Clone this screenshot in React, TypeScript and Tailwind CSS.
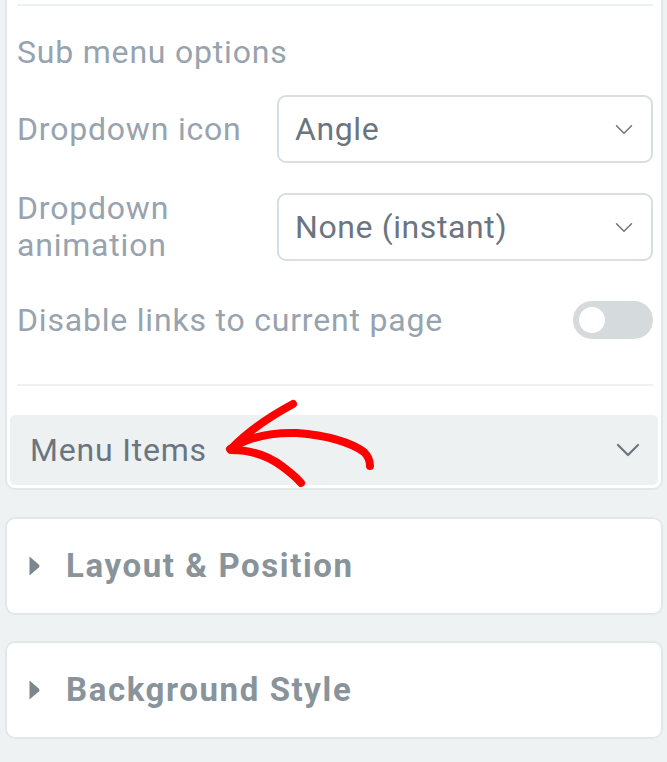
import React from "react";

const Chevron = ({ className }: { className?: string }) => (
  <svg viewBox="0 0 24 14" className={className} fill="none" stroke="currentColor" strokeLinecap="round" strokeLinejoin="round">
    <path d="M2 2l10 10 10-10" />
  </svg>
);

const Caret = () => (
  <svg viewBox="0 0 11 20" className="w-[11px] h-[20px] text-[#7b868d]" fill="currentColor">
    <path d="M0.5 0.5 L10 8.8 Q11 10 10 11.2 L0.5 19.5 Z" />
  </svg>
);

const SelectBox = ({ value }: { value: string }) => (
  <div className="flex-1 h-[68px] border-2 border-[#d8dee1] rounded-[9px] flex items-center justify-between pl-[16px] pr-[18px]">
    <span className="text-[32px] tracking-[0.6px] text-[#6b7580]">{value}</span>
    <Chevron className="w-[18px] h-[11px] text-[#6b7580] [stroke-width:2]" />
  </div>
);

const Section = ({ title }: { title: string }) => (
  <div className="h-[98px] bg-white border-2 border-[#e1e8ea] rounded-[10px] flex items-center pl-[22px]">
    <Caret />
    <span className="ml-[26px] text-[33px] font-bold tracking-[1.6px] text-[#89939a]">{title}</span>
  </div>
);

export default function App() {
  return (
    <div
      className="min-h-[762px] bg-[#eef2f3] overflow-hidden pl-[5px] pr-[4px]"
      style={{ fontFamily: "Roboto, 'Liberation Sans', sans-serif" }}
    >
      {/* open panel, top scrolled out of view */}
      <div className="relative -mt-[10px] bg-white border-2 border-[#e1e8ea] rounded-b-[10px] pt-[12px] pb-[3px]">
        <div className="pl-[10px] pr-[8px] text-[32px] tracking-[0.8px] text-[#97a3ae]">
          <div className="h-[2px] bg-[#eef1f2]" />
          <div className="mt-[26px] h-[40px] leading-[40px]">Sub menu options</div>

          <div className="mt-[23px] flex items-center">
            <div className="w-[260px] leading-[40px]">Dropdown icon</div>
            <SelectBox value="Angle" />
          </div>

          <div className="mt-[27px] flex items-center">
            <div className="w-[260px] leading-[37px]">
              Dropdown
              <br />
              animation
            </div>
            <SelectBox value="None (instant)" />
          </div>

          <div className="mt-[37px] h-[38px] flex items-center justify-between">
            <span className="leading-[38px]">Disable links to current page</span>
            <div className="w-[80px] h-[38px] rounded-full bg-[#d5dadd] flex items-center pl-[6px]">
              <div className="w-[26px] h-[26px] rounded-full bg-white" />
            </div>
          </div>

          <div className="mt-[45px] h-[2px] bg-[#eef1f2]" />
        </div>

        <div className="mt-[29px] mx-[3px] h-[70px] rounded-[5px] bg-[#eef1f2] flex items-center justify-between pl-[20px] pr-[18px]">
          <span className="text-[32px] tracking-[0.8px] text-[#6b7580]">Menu Items</span>
          <Chevron className="w-[24px] h-[14px] text-[#6b7580] [stroke-width:2.2]" />
        </div>

        {/* red annotation arrow, drawn in page coordinates */}
        <svg
          className="absolute left-0 top-0 pointer-events-none"
          width="667"
          height="510"
          viewBox="0 -8 667 510"
          fill="none"
          stroke="#ff0000"
          strokeWidth="8"
          strokeLinecap="round"
          strokeLinejoin="round"
        >
          <path d="M223 449 C240 438 262 432 290 433 C320 435 345 443 357 452 C362 457 363 462 363 466" />
          <path d="M224 449 C240 432 262 417 286 404" />
          <path d="M224 450 C245 450 262 456 276 467 C284 473 290 478 294 483" />
        </svg>
      </div>

      <div className="mt-[27px] flex flex-col gap-[26px]">
        <Section title="Layout & Position" />
        <Section title="Background Style" />
      </div>
    </div>
  );
}
